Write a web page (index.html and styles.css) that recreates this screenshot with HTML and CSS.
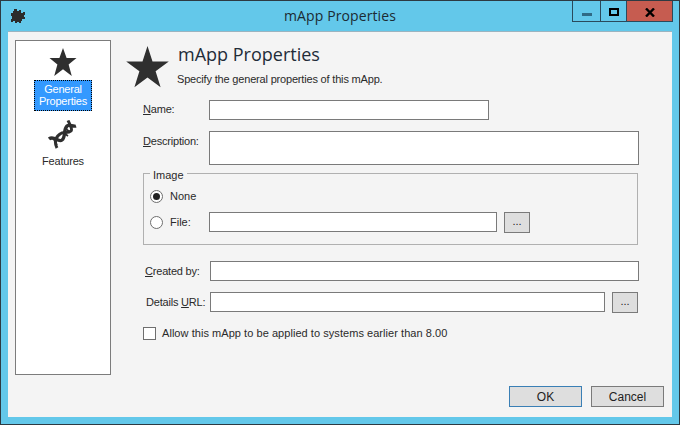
FILE: index.html
```html
<!DOCTYPE html>
<html lang="en">
<head>
  <meta charset="UTF-8">
  <title>mApp Properties</title>
  <link rel="stylesheet" href="styles.css">
</head>
<body>
  <div class="window">
    <!-- Title bar -->
    <div class="titlebar">
      <svg class="app-icon" width="16" height="16" viewBox="0 0 16 16">
        <path d="M4 1h3v2h2V2h2v3h2V4h2v3h-1v2h1v2h-3v2h-1v2H9v-1H7v1H5v-2H3v1H1v-3h1V8H1V5h2V3h1z" fill="#2b2b2b"/>
      </svg>
      <div class="title">mApp Properties</div>
      <div class="controls">
        <div class="ctl ctl-min"><span class="min-bar"></span></div>
        <div class="ctl ctl-max"><span class="max-box"></span></div>
        <div class="ctl ctl-close">
          <svg width="10" height="9" viewBox="0 0 10 9"><path d="M1 0.5L9 8.5M9 0.5L1 8.5" stroke="#000" stroke-width="2.4" fill="none"/></svg>
        </div>
      </div>
    </div>

    <div class="content">
      <!-- Side list -->
      <div class="sidebar">
        <div class="side-item">
          <svg width="30" height="30" viewBox="0 0 30 30"><path d="M15 1L18.6 11H28.5L20.6 17.6L23.8 29L15 22.3L6.2 29L9.4 17.6L1.5 11H11.4Z" fill="#2f2f2f"/></svg>
          <div class="side-label selected">General<br>Properties</div>
        </div>
        <div class="side-item side-features">
          <svg width="30" height="30" viewBox="0 0 30 30">
            <path d="M1 19C6 15 10 23 14 20C18 17 15 10 19 6C21 4 25 7 28 6" stroke="#2f2f2f" stroke-width="3.4" fill="none"/>
            <path d="M9 28C6 22 8 17 12 14C15 11 20 14 23 11C25 9 22 5 20 0.5" stroke="#2f2f2f" stroke-width="3" fill="none"/>
            <path d="M5 18L9 25M16 13L20 16M18 9L22 12" stroke="#2f2f2f" stroke-width="1.6" fill="none"/>
          </svg>
          <div class="side-label features-label">Features</div>
        </div>
      </div>

      <div class="main">
        <div class="header">
          <svg class="big-star" width="44" height="44" viewBox="0 0 44 44"><path d="M21.5 1l5 15.6h16.3l-13.2 9.7 5 16-13.1-9.9-13.1 9.9 5-16L.2 16.6h16.3z" fill="#2f2f2f"/></svg>
          <div>
            <h1>mApp Properties</h1>
            <p class="subtitle">Specify the general properties of this mApp.</p>
          </div>
        </div>

        <div class="form">
          <div class="row row-name">
            <label class="lbl lbl-name"><u>N</u>ame:</label>
            <input class="field field-name" type="text">
          </div>
          <div class="row row-desc">
            <label class="lbl"><u>D</u>escription:</label>
            <textarea class="field field-desc"></textarea>
          </div>

          <fieldset class="group">
            <legend>Image</legend>
            <div class="radio-row">
              <span class="radio checked"></span>
              <span class="radio-text">None</span>
            </div>
            <div class="radio-row radio-file">
              <span class="radio"></span>
              <span class="radio-text file-text">File:</span>
              <input class="field field-file" type="text">
              <button class="dots" type="button">...</button>
            </div>
          </fieldset>

          <div class="row row-created">
            <label class="lbl lbl-wide"><u>C</u>reated by:</label>
            <input class="field field-created" type="text">
          </div>
          <div class="row row-url">
            <label class="lbl lbl-wide lbl-url">Details <u>U</u>RL:</label>
            <input class="field field-url" type="text">
            <button class="dots" type="button">...</button>
          </div>
          <div class="check-row">
            <span class="checkbox"></span>
            <span class="check-text">Allow this mApp to be applied to systems earlier than 8.00</span>
          </div>
        </div>

        <div class="footer">
          <button class="btn btn-default" type="button">OK</button>
          <button class="btn" type="button">Cancel</button>
        </div>
      </div>
    </div>
  </div>
</body>
</html>
```

FILE: styles.css
```css
html, body {
  margin: 0;
  height: 100%;
  overflow: hidden;
}

body {
  font-family: "Liberation Sans", Arial, sans-serif;
  font-size: 11px;
  color: #2a2a2a;
}

* {
  box-sizing: border-box;
}

.window {
  width: 680px;
  height: 425px;
  background-color: #63c8ea;
  border: 1px solid #2d3a42;
  padding: 0 7px 7px 7px;
  display: flex;
  flex-direction: column;
}

/* Title bar */
.titlebar {
  height: 30px;
  flex-shrink: 0;
  position: relative;
  display: flex;
  justify-content: center;
  align-items: center;
}

.app-icon {
  position: absolute;
  left: 2px;
  top: 7px;
}

.title {
  font-family: "Open Sans", sans-serif;
  font-size: 14px;
  letter-spacing: 0.1px;
  color: #1c2b33;
  margin-top: -2px;
}

.controls {
  position: absolute;
  top: 0;
  right: -1px;
  display: flex;
  height: 21px;
  border: 1px solid #2a4a5c;
  border-top: none;
}

.ctl {
  height: 20px;
  display: flex;
  align-items: center;
  justify-content: center;
}

.ctl-min {
  width: 28px;
  border-right: 1px solid #2a4a5c;
}

.ctl-max {
  width: 26px;
  border-right: 1px solid #2a4a5c;
}

.ctl-close {
  width: 45px;
  background-color: #c65c50;
}

.min-bar {
  width: 10px;
  height: 3px;
  background-color: #2f6a85;
  margin-top: 7px;
}

.max-box {
  width: 10px;
  height: 8px;
  border: 2px solid #000;
  margin-top: 2px;
}

.ctl-close svg {
  margin-top: 2px;
}

/* Client area */
.content {
  flex: 1;
  background-color: #f4f4f4;
  border-top: 1px solid #9bb4c0;
  display: flex;
  padding: 8px 8px 10px 7px;
}

.sidebar {
  width: 96px;
  height: 335px;
  background-color: #fff;
  border: 1px solid #7c7c7c;
  flex-shrink: 0;
  display: flex;
  flex-direction: column;
  align-items: center;
  padding-top: 6px;
}

.side-item {
  display: flex;
  flex-direction: column;
  align-items: center;
}

.side-item svg {
  display: block;
}

.side-features {
  margin-top: 9px;
}

.side-label {
  text-align: center;
  line-height: 12px;
  margin-top: 3px;
  letter-spacing: -0.2px;
}

.features-label {
  margin-top: 5px;
}

.selected {
  width: 58px;
  height: 31px;
  background-color: #3399ff;
  color: #fff;
  border: 1px dotted #000;
  padding-top: 2px;
}

.main {
  flex: 1;
  display: flex;
  flex-direction: column;
}

.header {
  display: flex;
  margin-left: 15px;
  margin-top: 5px;
}

.big-star {
  display: block;
  flex-shrink: 0;
}

h1 {
  font-family: "Open Sans", sans-serif;
  font-size: 18px;
  font-weight: 400;
  line-height: 24px;
  margin: -3px 0 0 8px;
  color: #222c38;
}

.subtitle {
  margin: 7px 0 0 7px;
  line-height: 13px;
  letter-spacing: -0.18px;
}

/* Form */
.form {
  margin-left: 32px;
  margin-top: 11px;
}

.row {
  display: flex;
  align-items: flex-start;
}

.lbl {
  width: 66px;
  flex-shrink: 0;
  line-height: 20px;
  letter-spacing: -0.2px;
}

.lbl-name {
  line-height: 18px;
}

.lbl-wide {
  width: 67px;
  padding-left: 2px;
}

.lbl-url {
  padding-left: 3px;
}

.field {
  display: block;
  height: 20px;
  margin: 0;
  padding: 0;
  background-color: #fff;
  border: 1px solid #7a7a7a;
  border-radius: 0;
  outline: none;
  resize: none;
}

.field-name {
  width: 280px;
}

.row-desc {
  margin-top: 11px;
}

.field-desc {
  width: 430px;
  height: 34px;
}

.group {
  width: 495px;
  height: 80px;
  margin: 0;
  padding: 0 0 0 6px;
  border: 1px solid #b0b0b0;
  min-width: 0;
}

.group legend {
  margin-left: 0;
  padding: 4px 3px 0 3px;
  line-height: 12px;
  height: 16px;
}

.radio-row {
  display: flex;
  align-items: center;
  height: 20px;
  margin-top: 5px;
}

.radio-file {
  margin-top: 6px;
}

.radio {
  width: 13px;
  height: 13px;
  border: 1px solid #6e6e6e;
  border-radius: 50%;
  background-color: #fff;
  flex-shrink: 0;
  position: relative;
}

.radio.checked::before {
  content: '';
  position: absolute;
  top: 2px;
  left: 2px;
  width: 7px;
  height: 7px;
  border-radius: 50%;
  background-color: #222;
}

.radio-text {
  margin-left: 7px;
}

.file-text {
  width: 39px;
}

.field-file {
  width: 288px;
}

.dots {
  width: 26px;
  height: 21px;
  margin: 0 0 0 7px;
  padding: 0 0 3px 0;
  background-color: #dedede;
  border: 1px solid #7a7a7a;
  border-radius: 0;
  font-family: "Liberation Sans", Arial, sans-serif;
  font-size: 11px;
  color: #222;
}

.row-created {
  margin-top: 16px;
}

.field-created {
  width: 429px;
}

.row-url {
  margin-top: 11px;
}

.field-url {
  width: 395px;
}

.check-row {
  display: flex;
  align-items: center;
  margin-top: 13px;
  height: 14px;
}

.checkbox {
  width: 13px;
  height: 13px;
  background-color: #fff;
  border: 1px solid #6e6e6e;
  margin-right: 6px;
}

.check-text {
  letter-spacing: 0.05px;
}

/* Bottom buttons */
.footer {
  margin-top: auto;
  display: flex;
  justify-content: flex-end;
  gap: 9px;
}

.btn {
  width: 73px;
  height: 21px;
  margin: 0;
  padding: 0;
  background-color: #dedede;
  border: 1px solid #7a7a7a;
  border-radius: 0;
  font-family: "Liberation Sans", Arial, sans-serif;
  font-size: 12px;
  color: #222;
}

.btn-default {
  border-color: #3a7fb5;
}
```
